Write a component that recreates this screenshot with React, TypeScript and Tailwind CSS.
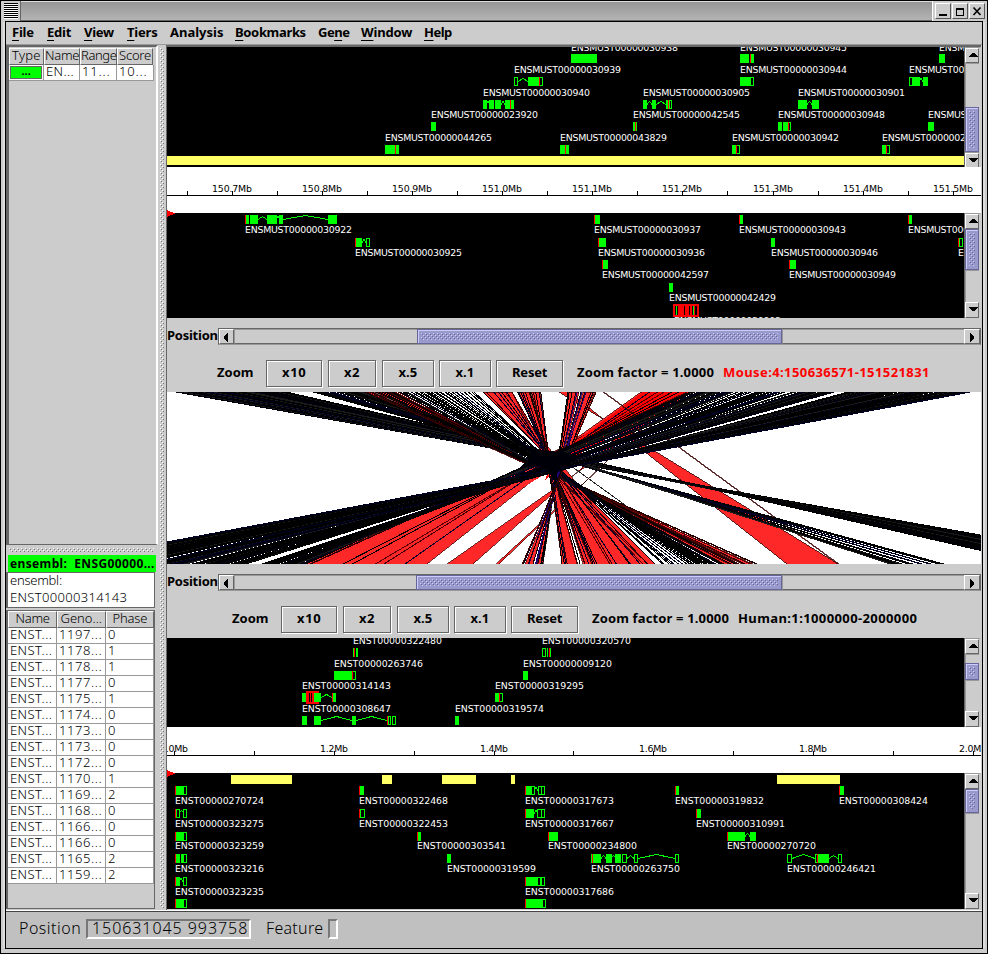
import { useLayoutEffect, useRef, useState } from "react";
import type { ReactNode } from "react";

/* Text whose letter spacing is adjusted so it occupies a given width. */
function Fit({ w, className = "", children }: { w: number; className?: string; children: ReactNode }) {
  const ref = useRef<HTMLSpanElement>(null);
  const [gap, setGap] = useState(0);
  useLayoutEffect(() => {
    const el = ref.current;
    if (!el) return;
    const n = (el.textContent || "").length;
    setGap((w - el.offsetWidth) / Math.max(1, n));
  }, [w]);
  return (
    <span className="flex shrink-0 whitespace-pre" style={{ width: w }}>
      <span ref={ref} className={`block shrink-0 whitespace-pre ${className}`} style={{ letterSpacing: gap }}>
        {children}
      </span>
    </span>
  );
}

function Dots({ id, light, dark }: { id: string; light: string; dark: string }) {
  return (
    <svg className="block h-full w-full" shapeRendering="crispEdges">
      <defs>
        <pattern id={id} width="4" height="4" patternUnits="userSpaceOnUse">
          <rect x="0" y="0" width="1" height="1" fill={light} />
          <rect x="2" y="2" width="1" height="1" fill={light} />
          <rect x="1" y="1" width="1" height="1" fill={dark} />
          <rect x="3" y="3" width="1" height="1" fill={dark} />
        </pattern>
      </defs>
      <rect width="100%" height="100%" fill={`url(#${id})`} />
    </svg>
  );
}

type Dir = "up" | "down" | "left" | "right";
const arrows: Record<Dir, string> = {
  up: "M4 9h9v-1h-1v-1h-1v-1h-1v-1h-3v1h-1v1h-1v1h-1z",
  down: "M4 5h9v1h-1v1h-1v1h-1v1h-3v-1h-1v-1h-1v-1h-1z",
  left: "M9 4v9h-1v-1h-1v-1h-1v-1h-1v-3h1v-1h1v-1h1v-1z",
  right: "M6 4v9h1v-1h1v-1h1v-1h1v-3h-1v-1h-1v-1h-1v-1z",
};

function ArrowButton({ dir, className }: { dir: Dir; className: string }) {
  return (
    <div className={`shrink-0 border border-t-white border-l-white border-r-[#666] border-b-[#666] bg-[#ccc] ${className}`}>
      <svg viewBox="1 1 15 14" className="block h-[14px] w-[15px]" shapeRendering="crispEdges">
        <path d={arrows[dir]} fill="#000" />
      </svg>
    </div>
  );
}

function Thumb({ id, size, vertical }: { id: string; size: number; vertical?: boolean }) {
  return (
    <div
      className="shrink-0 border border-[#666699] bg-[#9999cc] shadow-[inset_1px_1px_0_#ccccff]"
      style={vertical ? { height: size } : { width: size }}
    >
      <div className="h-full w-full p-[3px]">
        <Dots id={id} light="#ccccff" dark="#666699" />
      </div>
    </div>
  );
}

function VScroll({ id, before, thumb }: { id: string; before: number; thumb: number }) {
  return (
    <div className="flex w-[17px] shrink-0 flex-col border-r-2 border-l border-l-[#666] border-r-[#ccc] border-t border-t-[#999] bg-[#ccc]">
      <ArrowButton dir="up" className="h-[15px]" />
      {before > 0 && <div className="shrink-0 border-t border-l border-[#999]" style={{ height: before }} />}
      <Thumb id={id} size={thumb} vertical />
      <div className="min-h-0 flex-1 border-t border-l border-[#999]" />
      <ArrowButton dir="down" className="h-[16px]" />
    </div>
  );
}

function HScroll({ id, before, thumb }: { id: string; before: number; thumb: number }) {
  return (
    <div className="flex h-[17px] flex-1 border border-[#666] border-b-[#999]">
      <ArrowButton dir="left" className="w-[15px]" />
      <div className="shrink-0 border-t border-l border-b border-[#999] border-b-[#666]" style={{ width: before }} />
      <Thumb id={id} size={thumb} />
      <div className="flex-1 border-t border-l border-b border-[#999] border-b-[#666]" />
      <ArrowButton dir="right" className="w-[16px]" />
    </div>
  );
}

/* ---------- gene tracks ---------- */
type Span = [number, number];
type Gene = {
  y: number;
  label?: [number, number, string];
  g?: Span[];
  o?: Span[];
  r?: number[];
  a?: Span[];
  sel?: Span;
  k?: Span[];
};

function GeneMark({ m }: { m: Gene }) {
  const y = m.y;
  return (
    <g>
      {m.sel && <rect x={m.sel[0]} y={y - 2} width={m.sel[1] - m.sel[0]} height={13} fill="#f00" />}
      {m.g?.map(([a, b], i) => <rect key={`g${i}`} x={a} y={y} width={b - a} height={9} fill="#0f0" />)}
      {m.o?.map(([a, b], i) => (
        <rect key={`o${i}`} x={a + 0.5} y={y + 0.5} width={b - a - 1} height={8} fill="#000" stroke="#0f0" />
      ))}
      {m.k?.map(([a, b], i) => <rect key={`k${i}`} x={a} y={y} width={b - a} height={9} fill="#000" />)}
      {m.a?.map(([a, b], i) => {
        const h = b - a > 12 ? 4 : 3;
        return (
          <path key={`a${i}`} d={`M${a} ${y + 4.5}L${(a + b) / 2} ${y + 4.5 - h}L${b} ${y + 4.5}`} fill="none" stroke="#0f0" strokeWidth="1" />
        );
      })}
      {m.r?.map((a, i) => <rect key={`r${i}`} x={a} y={y} width={1} height={9} fill="#f00" />)}
      {m.label && (
        <text x={m.label[0]} y={m.label[1]} textLength={m.label[2].length * 5.97 - 0.6} fill="#fff" className="font-['DejaVu_Sans',sans-serif] text-[9.4px]">
          {m.label[2]}
        </text>
      )}
    </g>
  );
}

const MU = "ENSMUST000000";
const HU = "ENST00000";

const mouseTop: Gene[] = [
  { y: 54, label: [571, 51, MU + "30938"], g: [[571, 597]] },
  { y: 54, label: [740, 51, MU + "30945"], g: [[740, 749], [751, 754]], r: [750] },
  { y: 54, label: [939, 51, MU + "30950"], g: [[939, 945]] },
  { y: 77, label: [514, 73, MU + "30939"], o: [[514, 518], [539, 543]], g: [[528, 539]], a: [[518, 528]], r: [539] },
  { y: 77, label: [740, 73, MU + "30944"], g: [[740, 751]], o: [[750, 754]] },
  { y: 77, label: [909, 73, MU + "30951"], o: [[909, 913]], g: [[912, 920], [923, 928]], a: [[919, 923]] },
  { y: 100, label: [483, 96, MU + "30940"], g: [[483, 487], [489, 494], [495, 501], [505, 510], [511, 514]], a: [[486, 490], [501, 505]], r: [510] },
  { y: 100, label: [643, 96, MU + "30905"], g: [[643, 647], [652, 656], [666, 668]], o: [[669, 672]], a: [[647, 652], [656, 666]], r: [668] },
  { y: 100, label: [798, 96, MU + "30901"], g: [[798, 807], [812, 819]], a: [[807, 812]] },
  { y: 122, label: [431, 118, MU + "23920"], g: [[431, 436]] },
  { y: 122, label: [633, 118, MU + "42545"], g: [[633, 635], [636, 637]], r: [635] },
  { y: 122, label: [778, 118, MU + "30948"], g: [[778, 788]], k: [[782, 783]], o: [[788, 791]], r: [788] },
  { y: 122, label: [928, 118, MU + "30952"], g: [[928, 934]] },
  { y: 145, label: [385, 141, MU + "44265"], g: [[385, 395], [396, 399]], r: [395] },
  { y: 145, label: [560, 141, MU + "43829"], g: [[560, 565], [566, 569]], r: [565] },
  { y: 145, label: [732, 141, MU + "30942"], g: [[732, 736]], o: [[736, 740]], r: [736] },
  { y: 145, label: [882, 141, MU + "23921"], g: [[882, 886]], o: [[886, 890]], r: [886] },
];

const mouseBottom: Gene[] = [
  { y: 215, label: [245, 233, MU + "30922"], g: [[246, 258], [267, 277], [279, 283], [328, 337]], k: [[249, 250]], a: [[258, 267], [276, 280], [283, 328]], r: [245] },
  { y: 238, label: [355, 256, MU + "30925"], g: [[356, 362]], o: [[366, 370]], a: [[362, 366]], r: [355] },
  { y: 215, label: [594, 233, MU + "30937"], g: [[595, 600]], r: [594] },
  { y: 238, label: [598, 256, MU + "30936"], g: [[599, 606]], r: [598] },
  { y: 260, label: [602, 278, MU + "42597"], g: [[603, 608]], r: [602] },
  { y: 283, label: [669, 301, MU + "42429"], g: [[669, 673]] },
  { y: 306, label: [674, 324, MU + "30903"], sel: [673, 699], k: [[675, 676], [677, 678], [684, 685], [689, 690], [692, 693], [695, 697]], g: [[676, 677], [693, 694]] },
  { y: 215, label: [739, 233, MU + "30943"], g: [[740, 743]], r: [739] },
  { y: 238, label: [771, 256, MU + "30946"], g: [[771, 775]] },
  { y: 260, label: [789, 278, MU + "30949"], g: [[790, 796]], r: [789] },
  { y: 215, label: [908, 233, MU + "30953"], g: [[909, 912]], r: [908] },
  { y: 238, label: [958, 256, MU + "30954"], o: [[959, 963]], r: [958] },
];

const humanTop: Gene[] = [
  { y: 648, label: [353, 644, HU + "322480"], g: [[353, 355], [356, 358]], r: [354] },
  { y: 648, label: [542, 644, HU + "320570"], o: [[542, 546]], g: [[547, 548], [550, 551]], r: [549] },
  { y: 671, label: [334, 667, HU + "263746"], g: [[334, 352]], o: [[352, 356]], r: [352] },
  { y: 671, label: [523, 667, HU + "009120"], g: [[523, 528]] },
  { y: 693, label: [302, 689, HU + "314143"], sel: [306, 319], k: [[309, 310], [311, 312]], g: [[302, 306], [314, 321], [333, 336]], a: [[321, 332]], r: [332] },
  { y: 693, label: [495, 689, HU + "319295"], g: [[495, 499]], o: [[499, 503]], r: [499] },
  { y: 716, label: [302, 712, HU + "308647"], g: [[302, 307], [314, 321], [352, 356]], o: [[388, 391], [392, 396]], a: [[321, 352], [356, 387]], r: [387] },
  { y: 716, label: [455, 712, HU + "319574"], g: [[455, 459]] },
];

const humanBottom: Gene[] = [
  { y: 786, label: [175, 804, HU + "270724"], g: [[176, 184]], o: [[183, 187]], r: [175] },
  { y: 809, label: [175, 827, HU + "323275"], o: [[176, 180], [183, 187]], a: [[179, 184]], r: [175] },
  { y: 832, label: [175, 849, HU + "323259"], g: [[176, 184]], o: [[183, 187]], r: [175] },
  { y: 854, label: [175, 872, HU + "323216"], g: [[176, 180], [181, 184]], o: [[183, 187]], r: [175] },
  { y: 877, label: [175, 895, HU + "323235"], g: [[176, 180]], o: [[183, 187]], a: [[179, 183]], r: [175] },
  { y: 899, g: [[176, 184]], o: [[183, 187]], r: [175] },
  { y: 786, label: [359, 804, HU + "322468"], g: [[360, 364]], r: [359] },
  { y: 809, label: [359, 827, HU + "322453"], o: [[360, 365]], r: [359] },
  { y: 832, label: [417, 849, HU + "303541"], g: [[418, 421]], r: [417] },
  { y: 854, label: [447, 872, HU + "319599"], g: [[447, 451]] },
  { y: 786, label: [525, 804, HU + "317673"], g: [[526, 532]], o: [[531, 535], [538, 542], [541, 545]], a: [[534, 538]], r: [525] },
  { y: 809, label: [525, 827, HU + "317667"], g: [[526, 534]], o: [[537, 542], [541, 545]], a: [[534, 538]], r: [525] },
  { y: 832, label: [548, 849, HU + "234800"], g: [[549, 558]], r: [548] },
  { y: 854, label: [591, 872, HU + "263750"], g: [[591, 601], [606, 612], [615, 621]], o: [[622, 627], [634, 638], [675, 679]], a: [[601, 606], [611, 616], [627, 634], [638, 675]], r: [592] },
  { y: 877, label: [525, 895, HU + "317686"], g: [[526, 537]], o: [[537, 541], [541, 545]], r: [525] },
  { y: 899, g: [[526, 543]], o: [[542, 546]], r: [525] },
  { y: 786, label: [675, 804, HU + "319832"], g: [[676, 679]], r: [675] },
  { y: 809, label: [696, 827, HU + "310991"], g: [[697, 701]], r: [696] },
  { y: 832, label: [727, 849, HU + "270720"], g: [[728, 745], [750, 756]], a: [[745, 750]], r: [727] },
  { y: 854, label: [787, 872, HU + "246421"], g: [[818, 829]], o: [[787, 792], [815, 818], [838, 842]], a: [[792, 815], [829, 838]], r: [817] },
  { y: 786, label: [839, 804, HU + "308424"], g: [[840, 844]], r: [839] },
];

function Track({ top, h, genes, contigs, marker, children }: { top: number; h: number; genes: Gene[]; contigs: [number, number, number][]; marker?: boolean; children: ReactNode }) {
  return (
    <div className="flex shrink-0 bg-black" style={{ height: h }}>
      <svg className="block w-[797px] shrink-0" height={h} viewBox={`167 ${top} 797 ${h}`} shapeRendering="crispEdges">
        {contigs.map(([x, y, w]) => <rect key={x} x={x} y={y} width={w} height={9} fill="#ffff66" />)}
        {genes.map((m, i) => <GeneMark key={i} m={m} />)}
        {marker && <path d={`M167 ${top - 3}L175 ${top + 0.5}L167 ${top + 4}z`} fill="#f00" />}
      </svg>
      {children}
    </div>
  );
}

function Axis({ top, line, majors, minors, labels, w }: { top: number; line: number; majors: number[]; minors: number[]; labels: string[]; w: number }) {
  return (
    <svg className="block h-[46px] w-[814px] shrink-0 bg-white" viewBox={`167 ${top} 814 46`} shapeRendering="crispEdges">
      <rect x="167" y={line} width="814" height="1" fill="#000" />
      {majors.map((x) => <rect key={x} x={x} y={line - 4} width="1" height="4" fill="#000" />)}
      {minors.map((x) => <rect key={x} x={x} y={line - 4} width="1" height="4" fill="#000" />)}
      {labels.map((t, i) => (
        <text key={t} x={majors[i] - w / 2} y={line - 3} textLength={w} fill="#000" className="font-['DejaVu_Sans',sans-serif] text-[9.4px]">
          {t}
        </text>
      ))}
      <path d={`M167 ${top + 43}L175 ${top + 46.5}L167 ${top + 50}z`} fill="#f00" />
    </svg>
  );
}

/* ---------- synteny links ---------- */
type Bundle = { t: Span; b: Span; n: number; seed: number; w?: number; colors?: string[] };
const INK = ["#000", "#000", "#000", "#000", "#000", "#000010", "#1a1a1a", "#000022"];
const HOT = ["#000", "#200000", "#00002a", "#5a0000", "#000", "#400000"];
const VIO = ["#000", "#200000", "#00002a", "#000", "#000", "#3a0000", "#200070"];

const bundles: Bundle[] = [
  { t: [176, 196], b: [1144, 1118], n: 10, seed: 3 },
  { t: [197, 262], b: [1118, 1062], n: 56, seed: 1, w: 1.3 },
  { t: [262, 287], b: [1062, 1040], n: 16, seed: 2 },
  { t: [313, 345], b: [945, 902], n: 15, seed: 4 },
  { t: [345, 362], b: [900, 890], n: 7, seed: 5 },
  { t: [364, 400], b: [757, 722], n: 17, seed: 6, colors: HOT },
  { t: [400, 448], b: [722, 690], n: 22, seed: 7 },
  { t: [448, 474], b: [690, 662], n: 9, seed: 8 },
  { t: [483, 512], b: [655, 612], n: 7, seed: 9, colors: HOT },
  { t: [517, 541], b: [598, 561], n: 12, seed: 10, colors: VIO },
  { t: [568, 597], b: [545, 522], n: 13, seed: 11, colors: VIO },
  { t: [648, 694], b: [405, 303], n: 7, seed: 12, colors: HOT },
  { t: [690, 725], b: [306, 288], n: 16, seed: 13 },
  { t: [726, 786], b: [300, 262], n: 27, seed: 14 },
  { t: [793, 836], b: [246, 218], n: 20, seed: 15 },
  { t: [848, 897], b: [214, 135], n: 44, seed: 16, w: 1.3 },
  { t: [903, 933], b: [135, 90], n: 18, seed: 17, w: 1.2 },
  { t: [940, 970], b: [86, 48], n: 18, seed: 18, w: 1.3 },
];

function noise(seed: number) {
  let s = seed * 7919 + 17;
  return () => {
    s = (s * 1103515245 + 12345) % 2147483648;
    return s / 2147483648;
  };
}

/* top-left, top-right, then the bottom pair */
const ribbons: [number, number, number, number][] = [
  [661, 690, 310, 352],
  [641, 661, 355, 400],
  [645, 660, 392, 427],
  [668, 692, 447, 473],
  [680, 682, 496, 499],
  [363, 373, 753, 742],
  [375, 395, 735, 720],
  [483, 512, 655, 612],
  [505, 512, 640, 598],
  [518, 529, 600, 583],
  [531, 540, 577, 562],
  [569, 579, 543, 537],
  [583, 595, 533, 525],
];

function Synteny() {
  return (
    <svg className="block h-[172px] w-[814px] shrink-0 bg-white" viewBox="167 392 814 172" shapeRendering="crispEdges">
      <path d="M569 392L787 564H838L559 392" fill="#ff2828" stroke="#300" strokeWidth="0.8" />
      {ribbons.map(([a, b, c, d], i) => {
        const x0 = Math.min(c, d);
        const x1 = Math.max(c, d);
        return <path key={i} d={`M${a} 392H${b}L${x0} 564H${x1}z`} fill="#ff2828" stroke="#300" strokeWidth="0.7" />;
      })}
      <path d="M306 564H400L548 472L525 468z" fill="#ff2828" />
      <path d="M643 392H690L640 420L560 465L545 480L553 458z" fill="#f00" />
      <path d="M603 392L838 564M604 392L839 564" stroke="#400808" fill="none" strokeWidth="0.8" />
      <path d="M545 470L560 472L655 564H596z" fill="#ff2828" />
      <path d="M556 480L585 564M556 478L592 564M557 476L610 564M558 476L643 564M558 478L648 564" stroke="#500" strokeWidth="1" fill="none" />
      <path d="M560 458L625 505" stroke="#222" strokeWidth="1" fill="none" />
      {bundles.map((bd) => {
        const rnd = noise(bd.seed);
        const ink = bd.colors ?? INK;
        return Array.from({ length: bd.n }, (_, i) => {
          const f = bd.n > 1 ? i / (bd.n - 1) : 0;
          const f2 = Math.min(1, Math.max(0, f + (rnd() - 0.5) * 0.22));
          const f3 = Math.min(1, Math.max(0, f + (rnd() - 0.5) * 0.1));
          return (
            <line
              key={`${bd.seed}-${i}`}
              x1={bd.t[0] + (bd.t[1] - bd.t[0]) * f3}
              y1={392}
              x2={bd.b[0] + (bd.b[1] - bd.b[0]) * f2}
              y2={564}
              stroke={ink[Math.floor(rnd() * ink.length)]}
              strokeWidth={bd.w ?? 1}
            />
          );
        });
      })}
      <path d="M530 449L549 451L570 453L580 458L568 465L558 470L556 484L551 476L543 466L520 467L530 459z" fill="#000008" />
    </svg>
  );
}

/* ---------- controls ---------- */
const BOLD = "font-['Noto_Sans',sans-serif] text-[13px] font-bold leading-[16px] text-black";

function ZoomButton({ w, tw, children }: { w: number; tw: number; children: string }) {
  return (
    <div className="flex h-[27px] items-center justify-center border border-[#666] pb-[3px] shadow-[inset_1px_1px_0_#fff,1px_1px_0_#fff]" style={{ width: w }}>
      <Fit w={tw} className={BOLD}>{children}</Fit>
    </div>
  );
}

function Controls({ id, offset, region, regionW, hot, before, thumb }: { id: string; offset: number; region: string; regionW: number; hot?: boolean; before: number; thumb: number }) {
  return (
    <div className="h-[74px] shrink-0 bg-[#ccc] pt-[9px]">
      <div className="flex h-[18px] items-start">
        <Fit w={51} className={BOLD}>Position</Fit>
        <div className="flex flex-1 pt-px">
          <HScroll id={id} before={before} thumb={thumb} />
        </div>
      </div>
      <div className="mt-[15px] flex items-start" style={{ paddingLeft: offset }}>
        <div className="pt-[4px]"><Fit w={36} className={BOLD}>Zoom</Fit></div>
        <div className="ml-[13px] flex">
          <ZoomButton w={56} tw={24}>x10</ZoomButton>
          <div className="ml-[6px]"><ZoomButton w={48} tw={16}>x2</ZoomButton></div>
          <div className="ml-[6px]"><ZoomButton w={52} tw={19}>x.5</ZoomButton></div>
          <div className="ml-[5px]"><ZoomButton w={52} tw={19}>x.1</ZoomButton></div>
          <div className="ml-[5px]"><ZoomButton w={67} tw={35}>Reset</ZoomButton></div>
        </div>
        <div className="ml-[14px] pt-[4px]"><Fit w={137} className={BOLD}>Zoom factor = 1.0000</Fit></div>
        <div className={hot ? "ml-[9px] pt-[4px] [&_span]:text-[#f00]" : "ml-[9px] pt-[4px]"}>
          <Fit w={regionW} className={BOLD}>{region}</Fit>
        </div>
      </div>
    </div>
  );
}

const LIGHT = "font-['Noto_Sans',sans-serif] text-[13px] leading-[13px] font-light text-black";

const menus: [string, number, number, number][] = [
  ["File", 0, 22, 13],
  ["Edit", 0, 24, 13],
  ["View", 0, 30, 13],
  ["Tiers", 0, 31, 12],
  ["Analysis", -1, 53, 12],
  ["Bookmarks", 0, 71, 12],
  ["Gene", 2, 31, 12],
  ["Window", 0, 51, 12],
  ["Help", 0, 28, 0],
];

function MenuBar() {
  return (
    <div className="flex h-[22px] shrink-0 bg-[#ccc] pt-[2px] pl-[6px]">
      {menus.map(([t, u, w, gap]) => (
        <div key={t} style={{ marginRight: gap }}>
          <Fit w={w} className={BOLD}>
            {u < 0 ? t : (
              <>
                {t.slice(0, u)}
                <span className="underline decoration-1 underline-offset-[3px]">{t[u]}</span>
                {t.slice(u + 1)}
              </>
            )}
          </Fit>
        </div>
      ))}
    </div>
  );
}

function HeadCell({ w, tw, children, center }: { w: number; tw: number; children: string; center?: boolean }) {
  return (
    <div
      className={`flex h-[17px] shrink-0 items-start border border-t-white border-l-white border-r-[#666] border-b-[#666] bg-[#ccc] ${center ? "justify-center" : "pl-0"}`}
      style={{ width: w }}
    >
      <Fit w={tw} className={LIGHT}>{children}</Fit>
    </div>
  );
}

function Cell({ w, tw, children }: { w: number; tw: number; children: string }) {
  return (
    <div className="flex h-4 shrink-0 items-start border-r border-b border-[#999] bg-white pl-[2px]" style={{ width: w }}>
      <Fit w={tw} className={LIGHT}>{children}</Fit>
    </div>
  );
}

const exons: [string, string][] = [
  ["1197", "0"], ["1178", "1"], ["1178", "1"], ["1177", "0"], ["1175", "1"], ["1174", "0"], ["1173", "0"], ["1173", "0"],
  ["1172", "0"], ["1170", "1"], ["1169", "2"], ["1168", "0"], ["1166", "0"], ["1166", "0"], ["1165", "2"], ["1159", "2"],
];

function Sidebar() {
  return (
    <div className="flex w-[152px] shrink-0 flex-col bg-[#ccc]">
      <div className="flex h-[500px] shrink-0 flex-col border-t-2 border-r-2 border-b border-l-[3px] border-t-[#666] border-r-white border-b-[#666] border-l-[#666]">
        <div className="mt-px flex">
          <HeadCell w={35} tw={29} center>Type</HeadCell>
          <HeadCell w={36} tw={34}>Name</HeadCell>
          <HeadCell w={37} tw={35}>Range</HeadCell>
          <HeadCell w={36} tw={32} center>Score</HeadCell>
        </div>
        <div className="flex">
          <div className="flex h-4 w-[35px] shrink-0 border-r border-b border-[#999] bg-white p-px">
            <div className="flex flex-1 items-center justify-center border border-[#666] bg-[#0f0] pb-1">
              <Fit w={9} className="text-[11px] font-bold leading-[9px] font-['Noto_Sans',sans-serif]">...</Fit>
            </div>
          </div>
          <Cell w={36} tw={28}>EN...</Cell>
          <Cell w={37} tw={28}>11...</Cell>
          <Cell w={37} tw={28}>10...</Cell>
        </div>
      </div>
      <div className="h-[10px] shrink-0 py-[3px] pr-1 pl-[3px]">
        <Dots id="dh" light="#fff" dark="#777" />
      </div>
      <div className="mr-[2px] ml-[2px] flex h-[17px] shrink-0 items-center bg-[#0f0] pl-[2px]">
        <Fit w={145} className="font-['Noto_Sans',sans-serif] text-[12px] leading-[16px] font-bold">{"ensembl:  ENSG00000..."}</Fit>
      </div>
      <div className="mr-[3px] flex h-[36px] shrink-0 flex-col gap-[4px] border-t border-r border-b border-l-[2px] border-[#666] bg-white pt-px pl-[2px]">
        <Fit w={52} className={LIGHT}>ensembl:</Fit>
        <Fit w={117} className={LIGHT}>ENST00000314143</Fit>
      </div>
      <div className="mt-[2px] mr-[3px] flex h-[299px] shrink-0 flex-col border border-l-[2px] border-[#666]">
        <div className="flex">
          <HeadCell w={49} tw={34} center>Name</HeadCell>
          <HeadCell w={49} tw={42} center>Geno...</HeadCell>
          <HeadCell w={48} tw={35} center>Phase</HeadCell>
        </div>
        {exons.map(([a, b], i) => (
          <div key={i} className="flex">
            <Cell w={49} tw={42}>ENST...</Cell>
            <Cell w={49} tw={43}>{a + "..."}</Cell>
            <Cell w={48} tw={8}>{b}</Cell>
          </div>
        ))}
      </div>
    </div>
  );
}

function TitleBar() {
  const btn = "flex h-[16px] w-[16px] items-center justify-center border border-t-white border-l-white border-r-[#555] border-b-[#555] bg-[#ccc]";
  return (
    <div className="flex h-[20px] shrink-0 bg-[#ccc]">
      <div className="flex w-[20px] shrink-0 flex-col gap-px border-r border-[#666] pt-[2px] pl-[3px]">
        {[0, 1, 2, 3, 4, 5, 6, 7].map((i) => (
          <div key={i} className="h-px w-[14px] bg-black shadow-[0_1px_0_#fff]" />
        ))}
      </div>
      <div className="flex-1 border-t border-b border-t-[#ddd] border-b-[#666] bg-linear-to-b from-[#969696] to-[#b4b4b4]" />
      <div className="flex w-[55px] shrink-0 items-center gap-px border-l border-white pl-[2px]">
        <div className={btn}><svg viewBox="0 0 14 14" className="h-[14px] w-[14px]" shapeRendering="crispEdges"><rect x="3" y="10" width="8" height="2" /></svg></div>
        <div className={btn}><svg viewBox="0 0 14 14" className="h-[14px] w-[14px]" shapeRendering="crispEdges"><path d="M3 4h8v8H3zM4 6v5h6V6z" fillRule="evenodd" /></svg></div>
        <div className={btn}><svg viewBox="0 0 14 14" className="h-[14px] w-[14px]"><path d="M3.5 3.5l7 7.5M10.5 3.5l-7 7.5" stroke="#000" strokeWidth="1.6" /></svg></div>
      </div>
    </div>
  );
}

const STATUS = "font-['Noto_Sans',sans-serif] text-[16px] leading-[16px] font-light text-black";

export default function App() {
  return (
    <div className="flex h-[954px] w-[988px] flex-col overflow-hidden border border-black bg-[#ccc]">
      <TitleBar />
      <div className="mr-[4px] ml-[4px] flex h-[928px] shrink-0 flex-col border border-black shadow-[-3px_0_0_-1px_#ddd,3px_0_0_-1px_#ddd]">
        <MenuBar />
        <div className="flex h-[867px] shrink-0 border-t border-[#999]">
          <Sidebar />
          <div className="w-[8px] shrink-0 bg-[#ccc] py-[3px] pr-[2px] pl-[2px]">
            <Dots id="dv" light="#fff" dark="#777" />
          </div>
          <div className="flex w-[815px] shrink-0 flex-col border-t-2 border-l border-[#666]">
            <Track top={47} h={120} genes={mouseTop} contigs={[[167, 156, 797]]}>
              <VScroll id="v1" before={44} thumb={45} />
            </Track>
            <Axis top={167} line={195} w={40} majors={[232, 322, 412, 502, 592, 682, 773, 863, 953]} minors={[187, 277, 367, 457, 547, 637, 727, 818, 908]}
              labels={["150.7Mb", "150.8Mb", "150.9Mb", "151.0Mb", "151.1Mb", "151.2Mb", "151.3Mb", "151.4Mb", "151.5Mb"]} />
            <Track top={213} h={105} genes={mouseBottom} contigs={[]} marker>
              <VScroll id="v2" before={0} thumb={41} />
            </Track>
            <Controls id="h1" offset={50} region="Mouse:4:150636571-151521831" regionW={207} hot before={183} thumb={365} />
            <Synteny />
            <Controls id="h2" offset={65} region="Human:1:1000000-2000000" regionW={179} before={182} thumb={366} />
            <Track top={638} h={89} genes={humanTop} contigs={[]}>
              <VScroll id="v3" before={9} thumb={17} />
            </Track>
            <Axis top={727} line={755} w={28} majors={[174, 334, 494, 653, 813, 973]} minors={[254, 414, 573, 733, 893]}
              labels={["1.0Mb", "1.2Mb", "1.4Mb", "1.6Mb", "1.8Mb", "2.0Mb"]} />
            <Track top={773} h={136} genes={humanBottom} marker
              contigs={[[231, 775, 61], [382, 775, 10], [442, 775, 34], [511, 775, 4], [777, 775, 63]]}>
              <VScroll id="v4" before={0} thumb={24} />
            </Track>
          </div>
        </div>
        <div className="flex flex-1 items-start border-t border-[#444] bg-[#c0c0c0] pt-[7px] pl-[13px] shadow-[0_-1px_0_#fff]">
          <div className="pt-px"><Fit w={62} className={STATUS}>Position</Fit></div>
          <div className="ml-[5px] flex h-[20px] w-[165px] items-start border-2 border-t-[#777] border-l-[#777] border-r-white border-b-white pl-[4px]">
            <div className="-mt-px"><Fit w={156} className={STATUS}>150631045 993758</Fit></div>
          </div>
          <div className="ml-[15px] pt-px"><Fit w={57} className={STATUS}>Feature</Fit></div>
          <div className="ml-[5px] h-[20px] w-[10px] border-2 border-t-[#777] border-l-[#777] border-r-white border-b-white" />
        </div>
      </div>
    </div>
  );
}
